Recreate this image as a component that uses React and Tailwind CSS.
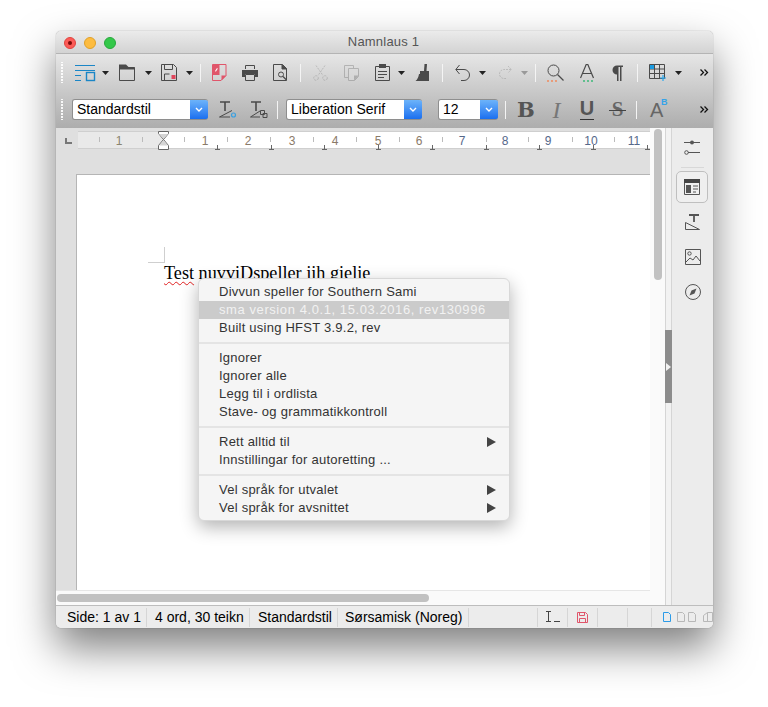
import React from 'react';

const FONT = "font-['Liberation_Sans',Arial,sans-serif]";

function Grip() {
  return (
    <div className="w-[3px] h-[22px] flex flex-col justify-between shrink-0">
      {Array.from({ length: 8 }).map((_, i) => (
        <div key={i} className="h-[1.5px] w-[2px] bg-white/90" />
      ))}
    </div>
  );
}

function Sep({ ml }) {
  return <div className={`w-px h-[18px] bg-[#f4f4f4] shrink-0 ${ml || ''}`} />;
}

function Caret({ c = '#222', className = '' }) {
  return (
    <svg width="7" height="4" viewBox="0 0 7 4" className={`shrink-0 ${className}`}>
      <path d="M0 0h7L3.5 4z" fill={c} />
    </svg>
  );
}

function More() {
  return (
    <svg width="9" height="7" viewBox="0 0 9 7" className="shrink-0">
      <path d="M0.5 0.5L3.5 3.5L0.5 6.5M4.5 0.5L7.5 3.5L4.5 6.5" fill="none" stroke="#111" strokeWidth="1.3" />
    </svg>
  );
}

function Ico({ w = 20, h = 20, children, className = '' }) {
  return (
    <svg width={w} height={h} viewBox={`0 0 ${w} ${h}`} fill="none" className={`shrink-0 ${className}`}>
      {children}
    </svg>
  );
}

function Combo({ label, w }) {
  return (
    <div className={`flex h-[21px] shrink-0 ${w} rounded-[3px] overflow-hidden border border-[#8e8e8e] border-r-0`}>
      <div className={`flex-1 bg-white flex items-center pl-[4px] text-[14px] text-black ${FONT}`}>{label}</div>
      <div className="w-[18px] bg-gradient-to-b from-[#6cb3fa] to-[#1a6fef] flex items-center justify-center">
        <svg width="8" height="5" viewBox="0 0 8 5">
          <path d="M1 1l3 3 3-3" fill="none" stroke="#fff" strokeWidth="1.4" />
        </svg>
      </div>
    </div>
  );
}

function Toolbar1() {
  const s = '#4a4a4a';
  return (
    <div className="h-[37px] flex items-center pl-[5px]">
      <Grip />
      {/* styles */}
      <Ico w={22} h={18} className="ml-[11px]">
        <path d="M0 1.5h20M0 6.5h20M0 11.5h6M0 16.5h6" stroke="#1b86c6" strokeWidth="1" />
        <rect x="11.5" y="8.5" width="8" height="8" stroke="#1b86c6" strokeWidth="1.4" />
      </Ico>
      <Caret className="ml-[5px]" />
      <Ico w={17} h={17} className="ml-[10px]">
        <path d="M0.5 3.5h15v13h-15z" stroke={s} strokeWidth="1" />
        <path d="M0 0.5h7l3 3h6v2H0z" fill={s} />
      </Ico>
      <Caret className="ml-[9px]" />
      <Ico w={17} h={17} className="ml-[9px]">
        <path d="M0.5 0.5h12l3 3v13h-15z" stroke={s} strokeWidth="1" />
        <path d="M3.5 0.5v5h8v-5M3.5 16v-6h5" stroke={s} strokeWidth="1" />
        <rect x="10.5" y="11" width="4" height="4" fill="#e0445a" />
      </Ico>
      <Caret className="ml-[8px]" />
      <Sep ml="ml-[7px]" />
      {/* pdf */}
      <Ico w={15} h={17} className="ml-[11px]">
        <path d="M0.5 0.5h13.5v11l-5 5h-8.5z" stroke="#e0556a" strokeWidth="1" />
        <path d="M1 1h6.5v10H1z" fill="#e0556a" />
        <path d="M9.5 16.5v-5h5z" fill="#e0556a" />
        <path d="M3 7l2-3 0.8 0.8-2 3z" fill="#fff" />
      </Ico>
      <Ico w={16} h={16} className="ml-[15px]">
        <path d="M3.5 4V0.5h9V4" stroke={s} strokeWidth="1" />
        <path d="M0 5h16v7h-3V9H3v3H0z" fill={s} />
        <path d="M3.5 9.5h9v6h-9z" stroke={s} strokeWidth="1" />
      </Ico>
      <Ico w={15} h={17} className="ml-[15px]">
        <path d="M0.5 0.5h9l4 4v12h-13z" stroke={s} strokeWidth="1" />
        <path d="M9 0.5v4.5h5" fill={s} stroke={s} />
        <circle cx="8" cy="10.5" r="2.5" stroke={s} strokeWidth="1" />
        <path d="M10 12.5l3.5 3.5" stroke={s} strokeWidth="1.3" />
      </Ico>
      <Sep ml="ml-[12px]" />
      <Ico w={15} h={16} className="ml-[12px] opacity-40">
        <path d="M3 0.5l7 10M12 0.5l-7 10" stroke="#8a8a8a" strokeWidth="1" strokeDasharray="2 1" />
        <circle cx="3" cy="13" r="2.3" stroke="#8a8a8a" strokeWidth="1" strokeDasharray="2 1" />
        <circle cx="12" cy="13" r="2.3" stroke="#8a8a8a" strokeWidth="1" strokeDasharray="2 1" />
      </Ico>
      <Ico w={15} h={16} className="ml-[16px] opacity-40">
        <path d="M0.5 0.5h9v12h-9z" stroke="#777" strokeWidth="1" />
        <path d="M4.5 3.5h10v8l-4 4h-6z" fill="#ddd" stroke="#777" strokeWidth="1" />
        <path d="M10 15.5v-5h5z" fill="#777" />
      </Ico>
      <Ico w={15} h={17} className="ml-[16px]">
        <path d="M0.5 2.5h14v14h-14z" stroke={s} strokeWidth="1" />
        <rect x="4" y="0" width="7" height="4" fill={s} />
        <path d="M3 7.5h9M3 10.5h9M3 13.5h6" stroke={s} strokeWidth="1" />
      </Ico>
      <Caret className="ml-[8px]" />
      <Ico w={15} h={17} className="ml-[10px]">
        <path d="M9.5 0h2.5l-0.5 7h-2.5z" fill={s} />
        <path d="M5 7h9v3H5z" fill={s} />
        <path d="M4 10h10v7H0.5c2-1.5 3-4 3.5-7z" fill={s} />
      </Ico>
      <Sep ml="ml-[12px]" />
      <Ico w={15} h={17} className="ml-[12px]">
        <path d="M1 5.5h8a5 5 0 0 1 0 11H6M4.5 1L0.8 5.5 4.5 10" stroke={s} strokeWidth="1" />
      </Ico>
      <Caret className="ml-[9px]" />
      <Ico w={14} h={15} className="ml-[12px] opacity-30">
        <path d="M13 4.5H6a4.5 4.5 0 0 0 0 9h2M10 1l3.3 3.5L10 8" stroke="#777" strokeWidth="1" strokeDasharray="2 1" />
      </Ico>
      <Caret c="#999" className="ml-[9px]" />
      <Sep ml="ml-[7px]" />
      <Ico w={17} h={18} className="ml-[11px]">
        <circle cx="6.5" cy="6.5" r="5.5" stroke={s} strokeWidth="1" />
        <path d="M10.5 10.5l6 6" stroke={s} strokeWidth="1.2" />
        <path d="M0 17h2M4 17h2M8 17h2" stroke="#f08a5d" strokeWidth="1.5" />
      </Ico>
      <Ico w={15} h={18} className="ml-[16px]">
        <path d="M0.5 14L6.2 0.5h1.6L13.5 14M2.8 9.5h8.4" stroke={s} strokeWidth="1.2" />
        <path d="M3 17h2M7 17h2M11 17h2" stroke="#3cb878" strokeWidth="1.5" />
      </Ico>
      <Ico w={11} h={16} className="ml-[17px]">
        <path d="M5 0.5h6v1.5H9.5V16H8V2H6.5v14H5V9.5a4.5 4.5 0 0 1 0-9z" fill={s} />
      </Ico>
      <Sep ml="ml-[14px]" />
      <Ico w={18} h={17} className="ml-[11px]">
        <path d="M0.5 0.5h15v14h-15zM0.5 5h15M0.5 9.5h15M5.5 0.5v14M10.5 0.5v14" stroke={s} strokeWidth="1" />
        <rect x="1" y="1" width="4" height="4" fill="#1b9be0" />
        <path d="M14 11v6M11 14h6" stroke="#2aa8ee" strokeWidth="1.2" />
      </Ico>
      <Caret className="ml-[8px]" />
      <div className="ml-auto mr-[4px]"><More /></div>
    </div>
  );
}

function Toolbar2() {
  const s = '#4a4a4a';
  return (
    <div className="h-[37px] flex items-center pl-[5px]">
      <Grip />
      <div className="ml-[8px]"><Combo label="Standardstil" w="w-[136px]" /></div>
      <Ico w={18} h={17} className="ml-[11px]">
        <path d="M1 1h10M6 1v9" stroke={s} strokeWidth="1.6" />
        <path d="M0.5 16L13 9.5M0.5 16H11" stroke={s} strokeWidth="1" />
        <circle cx="14.5" cy="14" r="2" stroke="#3aa0e0" strokeWidth="1.2" />
      </Ico>
      <Ico w={18} h={17} className="ml-[13px]">
        <path d="M1 1h10M6 1v9" stroke={s} strokeWidth="1.6" />
        <path d="M0.5 16L10 10M0.5 16H10" stroke={s} strokeWidth="1" />
        <path d="M10.5 9.5h4v4h-4zM13 12.5h4v4h-4z" stroke={s} strokeWidth="1" />
      </Ico>
      <Sep ml="ml-[9px]" />
      <div className="ml-[8px]"><Combo label="Liberation Serif" w="w-[136px]" /></div>
      <div className="ml-[16px]"><Combo label="12" w="w-[60px]" /></div>
      <Sep ml="ml-[7px]" />
      <span className="ml-[11px] w-[18px] text-[21px] leading-none font-bold text-[#555] font-['DejaVu_Serif',serif]">B</span>
      <span className="ml-[14px] w-[15px] text-center text-[24px] leading-none italic text-[#777] font-['Liberation_Serif',serif]">I</span>
      <div className="ml-[16px] w-[14px] flex flex-col items-center shrink-0">
        <span className="text-[20px] leading-[19px] font-bold text-[#555] font-['Liberation_Sans',sans-serif]">U</span>
        <div className="h-px w-[14px] bg-[#333] mt-[1px]" />
      </div>
      <div className="relative ml-[15px] w-[17px] h-[20px] shrink-0 flex items-center justify-center">
        <span className="text-[21px] leading-none text-[#666] font-bold font-['Liberation_Serif',serif]">S</span>
        <div className="absolute left-0 right-0 top-[10px] h-px bg-[#444]" />
      </div>
      <Sep ml="ml-[10px]" />
      <div className="relative ml-[13px] w-[17px] h-[20px] shrink-0">
        <span className={`text-[20px] leading-[20px] text-[#666] ${FONT}`}>A</span>
        <span className={`absolute left-[11px] top-[-4px] text-[9px] font-bold text-[#35a3e8] ${FONT}`}>B</span>
      </div>
      <div className="ml-auto mr-[4px]"><More /></div>
    </div>
  );
}

function Ruler() {
  const nums = [
    [119, '1'], [205, '1'], [248, '2'], [292, '3'], [335, '4'], [378, '5'],
    [419, '6'], [462, '7'], [505, '8'], [548, '9'], [591, '10'], [634, '11'],
  ];
  const ticks = [99, 142, 184, 227, 270, 313, 356, 399, 442, 486, 528, 572, 614];
  const long = [217, 271, 324, 378, 432, 486, 539, 593, 647];
  return (
    <svg width="657" height="22" viewBox="56 128 657 22" className="block shrink-0">
      <rect x="56" y="128" width="657" height="22" fill="#dfdfdf" />
      <path d="M66 138v5h6" stroke="#777" strokeWidth="2" fill="none" />
      <rect x="78" y="132" width="85" height="16" fill="#e9e9e9" />
      <rect x="163" y="132" width="488" height="16" fill="#fff" />
      <path d="M78 131.5H651M78 148.5H651" stroke="#cfcfcf" />
      {ticks.map((x) => (
        <path key={x} d={`M${x + 0.5} 137v5`} stroke="#bbb" />
      ))}
      {long.map((x) => (
        <path key={x} d={`M${x + 0.5} 145v4M${x - 2} 149.5h5`} stroke="#666" />
      ))}
      {nums.map(([x, n], i) => (
        <text key={i} x={x} y="145" fontSize="12" textAnchor="middle" fontFamily="Liberation Sans" fill={i === 0 ? '#8a8470' : i > 6 ? '#55688a' : '#8a7a68'}>{n}</text>
      ))}
      <path d="M158.5 131.5h10v2l-5 6 5 6v4h-10v-4l5-6-5-6z" fill="#fff" stroke="#666" />
      <path d="M159 145.5h9l-4.5-5z" fill="#d5d5d5" />
      <path d="M159 134h9l-4.5 5z" fill="#d5d5d5" />
    </svg>
  );
}

function MenuItem({ label, arrow, disabled }) {
  return (
    <div className={`h-[18px] pl-[20px] pr-[13px] flex items-center justify-between text-[13px] ${disabled ? 'bg-[#cbcbcb] text-[#f2f2f2] tracking-[0.58px]' : 'text-[#333] tracking-[0.24px]'}`}>
      <span>{label}</span>
      {arrow && (
        <svg width="9" height="10" viewBox="0 0 9 10">
          <path d="M0 0l9 5-9 5z" fill="#444" />
        </svg>
      )}
    </div>
  );
}

function MenuSep() {
  return <div className="h-[2px] my-[5px] bg-[#e4e4e4]" />;
}

function ContextMenu() {
  return (
    <div className={`absolute left-[142px] top-[128px] w-[312px] h-[243px] py-[4px] rounded-[6px] bg-[#f5f5f5] border border-[#d8d8d8] shadow-[0_6px_18px_rgba(0,0,0,0.3)] ${FONT}`}>
      <MenuItem label="Divvun speller for Southern Sami" />
      <MenuItem label="sma version 4.0.1, 15.03.2016, rev130996" disabled />
      <MenuItem label="Built using HFST 3.9.2, rev" />
      <MenuSep />
      <MenuItem label="Ignorer" />
      <MenuItem label="Ignorer alle" />
      <MenuItem label="Legg til i ordlista" />
      <MenuItem label="Stave- og grammatikkontroll" />
      <MenuSep />
      <MenuItem label="Rett alltid til" arrow />
      <MenuItem label="Innstillingar for autoretting ..." />
      <MenuSep />
      <MenuItem label="Vel språk for utvalet" arrow />
      <MenuItem label="Vel språk for avsnittet" arrow />
    </div>
  );
}

function Editor() {
  return (
    <div className="relative flex-1 flex flex-col min-w-0 overflow-visible">
      <div className="flex-1 flex bg-[#dfdfdf] overflow-hidden">
        <div className="ml-[20px] mt-[24px] w-[574px] h-[500px] bg-white border-l border-t border-[#b5b5b5] shrink-0">
          <div className="ml-[71px] mt-[72px] w-[17px] h-[16px] border-r border-b border-[#cfcfcf]" />
          <div className="ml-[87px] text-[18.2px] leading-[20px] text-black font-['Liberation_Serif',serif] whitespace-nowrap">
            <span className="underline decoration-wavy decoration-[#e02020] decoration-1 underline-offset-2">Test</span> nuvviDspeller jih gielie
          </div>
        </div>
      </div>
      <ContextMenu />
      <div className="h-[15px] bg-[#fafafa] flex items-center px-[1px] border-t border-[#e6e6e6]">
        <div className="h-[8px] w-[372px] rounded-full bg-[#c1c1c1]" />
      </div>
    </div>
  );
}

function VScroll() {
  return (
    <div className="w-[15px] -mt-[22px] bg-[#fafafa] flex justify-center shrink-0">
      <div className="w-[8px] h-[151px] mt-[1px] rounded-full bg-[#c1c1c1]" />
    </div>
  );
}

function Sidebar() {
  const s = '#555';
  return (
    <div className="flex shrink-0">
      <div className="w-[7px] -mt-[22px] relative bg-[#f2f2f2] border-x border-[#d5d5d5]">
        <div className="absolute -left-px top-[202px] w-[7px] h-[73px] bg-[#8c8c8c] flex items-center justify-center">
          <svg width="5" height="8" viewBox="0 0 5 8"><path d="M0 0l5 4-5 4z" fill="#f2f2f2" /></svg>
        </div>
      </div>
      <div className="w-[41px] bg-[#ececec] -mt-[22px] flex flex-col items-center pt-[12px]">
        <Ico w={17} h={17}>
          <path d="M0 2.5h16" stroke={s} />
          <circle cx="8" cy="2.5" r="2" fill={s} />
          <path d="M4 12.5h12" stroke={s} />
          <circle cx="2.5" cy="12.5" r="1.8" stroke={s} />
        </Ico>
        <div className="w-[23px] h-px bg-[#d8d8d8] mt-[10px]" />
        <div className="w-[32px] h-[32px] mt-[3px] mr-[1px] rounded-[5px] border border-[#bfbfbf] bg-[#efefef] flex items-center justify-center">
          <Ico w={16} h={16}>
            <path d="M0.5 0.5h15v15h-15z" stroke={s} />
            <rect x="0" y="0" width="16" height="4" fill="#444" />
            <rect x="2" y="6" width="5" height="8" fill="#555" />
            <path d="M9 7h5M9 10h5M9 13h3" stroke={s} />
          </Ico>
        </div>
        <Ico w={16} h={16} className="mt-[11px]">
          <path d="M4 1h10M9 1v7" stroke={s} strokeWidth="1.8" />
          <path d="M0.5 15.5v-7l14 7z" stroke={s} />
        </Ico>
        <Ico w={16} h={16} className="mt-[19px]">
          <path d="M0.5 0.5h15v15h-15z" stroke={s} />
          <circle cx="4.5" cy="4.5" r="1.7" stroke={s} />
          <path d="M1 13l4-4 3 2 3-4 4 5" stroke={s} />
        </Ico>
        <Ico w={16} h={16} className="mt-[19px]">
          <circle cx="8" cy="8" r="7.5" stroke={s} />
          <path d="M11.5 4.5L9.5 9.5 4.5 11.5 6.5 6.5z" fill={s} />
        </Ico>
      </div>
    </div>
  );
}

function StatusCell({ w, pl = 'pl-[8px]', children, center }) {
  return (
    <div className={`h-[19px] shrink-0 ${w} flex items-center ${center ? 'justify-center' : pl} border-r border-[#d6d6d6]`}>
      {children}
    </div>
  );
}

function StatusBar() {
  return (
    <div className={`h-[23px] bg-[#ececec] border-t border-[#bdbdbd] flex items-center pl-[6px] text-[14px] text-black rounded-b-[5px] ${FONT}`}>
      <StatusCell w="w-[85px]" pl="pl-[5px]">Side: 1 av 1</StatusCell>
      <StatusCell w="w-[103px]">4 ord, 30 teikn</StatusCell>
      <StatusCell w="w-[88px]">Standardstil</StatusCell>
      <StatusCell w="w-[131px]" pl="pl-[7px]">Sørsamisk (Noreg)</StatusCell>
      <StatusCell w="w-[69px]"><span /></StatusCell>
      <StatusCell w="w-[30px]" center>
        <Ico w={16} h={12}>
          <path d="M1 0.5h5M1 10.5h5M3.5 0.5v10" stroke="#444" />
          <path d="M9 10.5h6" stroke="#444" />
        </Ico>
      </StatusCell>
      <StatusCell w="w-[30px]" center>
        <Ico w={11} h={11}>
          <path d="M0.5 0.5h8l2 2v8h-10z" stroke="#e0556a" />
          <path d="M2.5 0.5v3h5v-3M2.5 10.5v-4h6v4" stroke="#e0556a" />
        </Ico>
      </StatusCell>
      <StatusCell w="w-[30px]"><span /></StatusCell>
      <StatusCell w="w-[24px]"><span /></StatusCell>
      <div className="flex items-center gap-[3px] ml-[11px] overflow-hidden">
        <Ico w={8} h={10}><path d="M0.5 0.5h5l2 2v7h-7z" stroke="#2b9be8" /></Ico>
        <Ico w={8} h={10} className="ml-[3px]"><path d="M0.5 0.5h5l2 2v7h-7z" stroke="#b8b8b8" /></Ico>
        <Ico w={8} h={10}><path d="M0.5 0.5h5l2 2v7h-7z" stroke="#b8b8b8" /></Ico>
        <Ico w={10} h={10} className="ml-[4px]"><path d="M4.5 0.5h5v9h-9v-6zM4.5 0.5v9" stroke="#b8b8b8" /></Ico>
      </div>
    </div>
  );
}

export default function App() {
  return (
    <div className="w-[768px] h-[707px] overflow-hidden bg-white pt-[31px] pl-[56px]">
      <div className={`w-[657px] h-[597px] flex flex-col rounded-[5px] shadow-[0_20px_42px_rgba(0,0,0,0.5),0_0_1px_rgba(0,0,0,0.5)] bg-[#ececec] ${FONT}`}>
        {/* Title bar */}
        <div className="h-[23px] shrink-0 relative flex items-center justify-center pr-[2px] rounded-t-[5px] bg-gradient-to-b from-[#ebebeb] to-[#d3d3d3] border-b border-[#b4b4b4]">
          <div className="absolute left-[8px] top-[6px] flex gap-[8px]">
            <div className="w-[12px] h-[12px] rounded-full bg-[#fc5b57] border border-[#e0443e] flex items-center justify-center">
              <div className="w-[4px] h-[4px] rounded-full bg-[#7a0a08]" />
            </div>
            <div className="w-[12px] h-[12px] rounded-full bg-[#fdbc40] border border-[#e0a028]" />
            <div className="w-[12px] h-[12px] rounded-full bg-[#34c84a] border border-[#28a83c]" />
          </div>
          <span className="text-[13px] text-[#555] tracking-[0.2px]">Namnlaus 1</span>
        </div>
        {/* Toolbars */}
        <div className="shrink-0 bg-gradient-to-b from-[#e6e6e6] to-[#adadad]">
          <Toolbar1 />
          <Toolbar2 />
        </div>
        <Ruler />
        {/* Main */}
        <div className="flex-1 flex min-h-0">
          <Editor />
          <VScroll />
          <Sidebar />
        </div>
        <StatusBar />
      </div>
    </div>
  );
}
